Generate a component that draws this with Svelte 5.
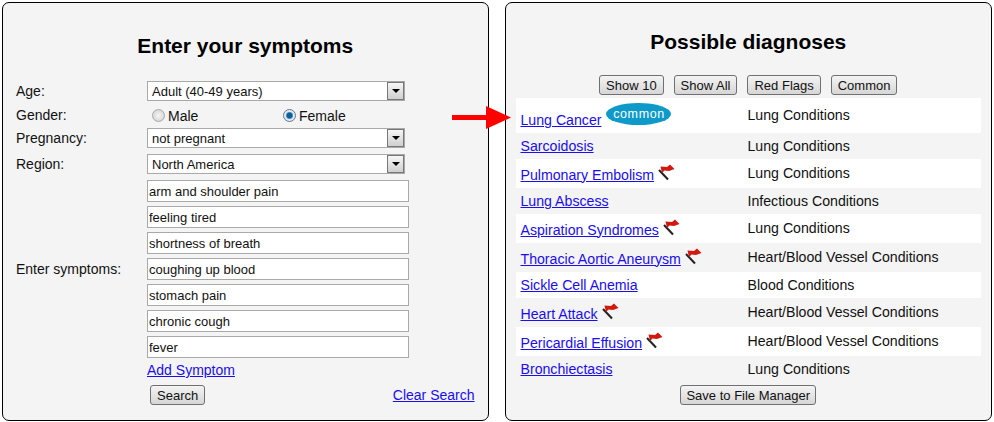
<script>
  const symptoms = [
    'arm and shoulder pain',
    'feeling tired',
    'shortness of breath',
    'coughing up blood',
    'stomach pain',
    'chronic cough',
    'fever'
  ];

  const diagnoses = [
    { name: 'Lung Cancer', group: 'Lung Conditions', common: true, h: 35 },
    { name: 'Sarcoidosis', group: 'Lung Conditions', h: 26 },
    { name: 'Pulmonary Embolism', group: 'Lung Conditions', flag: true, h: 29 },
    { name: 'Lung Abscess', group: 'Infectious Conditions', h: 26 },
    { name: 'Aspiration Syndromes', group: 'Lung Conditions', flag: true, h: 29 },
    { name: 'Thoracic Aortic Aneurysm', group: 'Heart/Blood Vessel Conditions', flag: true, h: 29 },
    { name: 'Sickle Cell Anemia', group: 'Blood Conditions', h: 26 },
    { name: 'Heart Attack', group: 'Heart/Blood Vessel Conditions', flag: true, h: 29 },
    { name: 'Pericardial Effusion', group: 'Heart/Blood Vessel Conditions', flag: true, h: 29 },
    { name: 'Bronchiectasis', group: 'Lung Conditions', h: 26 }
  ];
</script>

{#snippet dropdown(text)}
  <div class="select">
    <span class="select-text">{text}</span>
    <span class="select-btn"><i class="caret"></i></span>
  </div>
{/snippet}

<div class="page">
  <section class="panel left">
    <h2>Enter your symptoms</h2>

    <div class="row age">
      <span class="label">Age:</span>
      {@render dropdown('Adult (40-49 years)')}
    </div>
    <div class="row gender">
      <span class="label">Gender:</span>
      <div class="radios">
        <span class="radio-item"><i class="radio"></i>Male</span>
        <span class="radio-item"><i class="radio on"></i>Female</span>
      </div>
    </div>
    <div class="row preg">
      <span class="label">Pregnancy:</span>
      {@render dropdown('not pregnant')}
    </div>
    <div class="row region">
      <span class="label">Region:</span>
      {@render dropdown('North America')}
    </div>
    <div class="row symptoms">
      <span class="label">Enter symptoms:</span>
      <div class="inputs">
        {#each symptoms as s}
          <input type="text" value={s} />
        {/each}
      </div>
    </div>
    <div class="add"><a href="#add">Add Symptom</a></div>
    <div class="actions">
      <button class="btn">Search</button>
      <a href="#clear">Clear Search</a>
    </div>
  </section>

  <section class="panel right">
    <h2>Possible diagnoses</h2>
    <div class="filters">
      <button class="btn">Show 10</button>
      <button class="btn">Show All</button>
      <button class="btn">Red Flags</button>
      <button class="btn">Common</button>
    </div>
    <div class="list">
      {#each diagnoses as d, i}
        <div class="dx" class:white={i % 2 === 0} style:height="{d.h}px">
          <div class="dx-name" class:has-pill={d.common} class:has-flag={d.flag}>
            <a href="#dx">{d.name}</a>
            {#if d.common}<span class="pill">common</span>{/if}
            {#if d.flag}
              <svg class="flag" width="17" height="17" viewBox="0 0 17 17">
                <path d="M1 6 L10 15.5" stroke="#222" stroke-width="2" />
                <path d="M2.5 2.5 L9 3 L12 0.5 L16.5 5 L11 7 L6.5 6.5 L4 9 Z" fill="#d2190f" />
              </svg>
            {/if}
          </div>
          <div class="dx-group" class:odd={d.h % 2 === 1}>{d.group}</div>
        </div>
      {/each}
    </div>
    <div class="save"><button class="btn">Save to File Manager</button></div>
  </section>

  <svg class="arrow" width="60" height="26" viewBox="0 0 60 26">
    <path d="M0 10 H34 V1 L59 12.5 L34 24 V15 H0 Z" fill="#f00" />
  </svg>
</div>

<style>
  :global(body) {
    margin: 0;
    background: #fff;
  }

  .page {
    position: relative;
    width: 994px;
    height: 422px;
    display: flex;
    gap: 16px;
    padding: 2px 2px 0 2px;
    box-sizing: border-box;
    font-family: "Liberation Sans", Arial, sans-serif;
    font-size: 14px;
    color: #111;
  }

  .panel {
    height: 419px;
    box-sizing: border-box;
    background: #f4f4f4;
    border: 1px solid #000;
    border-radius: 7px;
  }

  h2 {
    margin: 0;
    font-size: 21px;
    line-height: 24px;
    font-weight: bold;
    text-align: center;
    color: #000;
  }

  a {
    color: #1a0dee;
    text-decoration: underline;
  }

  .left {
    width: 487px;
    padding: 31px 13px 0 13px;
  }

  .row {
    display: flex;
    align-items: center;
  }

  .label {
    width: 131px;
    flex: none;
  }

  .age { margin-top: 23px; height: 20px; }
  .gender { height: 27px; }
  .preg { height: 20px; }
  .region { margin-top: 6px; height: 20px; }
  .symptoms { margin-top: 6px; }

  .select {
    width: 258px;
    height: 20px;
    box-sizing: border-box;
    border: 1px solid #a9a9a9;
    background: #fff;
    display: flex;
    align-items: center;
    justify-content: space-between;
    padding-left: 4px;
    font-size: 13px;
  }

  .select-btn {
    width: 17px;
    height: 18px;
    box-sizing: border-box;
    border: 1px solid #777;
    background: linear-gradient(#f6f6f6, #cfcfcf);
    display: flex;
    align-items: center;
    justify-content: center;
  }

  .caret {
    width: 0;
    height: 0;
    border-left: 4px solid transparent;
    border-right: 4px solid transparent;
    border-top: 4px solid #000;
  }

  .radios {
    display: flex;
    position: relative;
    top: 1px;
  }

  .radio-item {
    width: 131px;
    display: flex;
    align-items: center;
    gap: 3px;
    padding-left: 5px;
    box-sizing: border-box;
  }

  .radio {
    width: 13px;
    height: 13px;
    box-sizing: border-box;
    border-radius: 50%;
    border: 1px solid #a8a8a8;
    background: radial-gradient(#f4f4f4, #cfcfcf);
  }

  .radio.on {
    border-color: #5f7a94;
    background: radial-gradient(circle, #0b5f9e 0 2.5px, #7fb0d0 3.5px, #e4eaef 4px);
  }

  .inputs {
    display: flex;
    flex-direction: column;
    gap: 4px;
  }

  input {
    width: 262px;
    height: 22px;
    box-sizing: border-box;
    border: 1px solid #a9a9a9;
    background: #fff;
    padding: 1px 1px 0;
    margin: 0;
    font: 13px "Liberation Sans", Arial, sans-serif;
    color: #111;
    outline: none;
  }

  .add {
    margin: 3px 0 0 131px;
    line-height: 18px;
  }

  .actions {
    display: flex;
    justify-content: space-between;
    align-items: center;
    margin: 6px 0 0 134px;
  }

  .btn {
    height: 20px;
    padding: 0 6px;
    box-sizing: border-box;
    border: 1px solid #707070;
    border-radius: 3px;
    background: linear-gradient(#f4f4f4, #d6d6d6);
    font: 13px "Liberation Sans", Arial, sans-serif;
    color: #111;
  }

  .right {
    width: 488px;
    padding: 27px 10px 0 10px;
  }

  .filters {
    display: flex;
    justify-content: center;
    gap: 10px;
    margin-top: 21px;
    height: 20px;
  }

  .list {
    margin-top: 3px;
    height: 284px;
  }

  .dx {
    display: flex;
    align-items: center;
    padding-left: 5px;
  }

  .dx.white {
    background: #fff;
  }

  .dx-name {
    width: 227px;
    flex: none;
    display: flex;
    align-items: center;
    font-size: 14.15px;
  }

  .has-pill a {
    margin-top: 9px;
  }

  .has-flag a {
    margin-top: 2px;
  }

  .pill {
    display: inline-block;
    margin: -3px 0 0 5px;
    width: 65px;
    height: 22px;
    line-height: 23px;
    border-radius: 50%;
    background: #0d9ac9;
    color: #fff;
    font-size: 12.5px;
    letter-spacing: 0.6px;
    text-align: center;
  }

  .flag {
    margin: -2px 0 0 4px;
  }

  .dx-group {
    flex: 1;
    font-size: 14.15px;
  }

  .dx-group.odd {
    padding-bottom: 2px;
  }

  .save {
    display: flex;
    justify-content: center;
    margin-top: 3px;
  }

  .save .btn {
    padding: 0 5px;
  }

  .arrow {
    position: absolute;
    left: 452px;
    top: 105px;
  }
</style>
